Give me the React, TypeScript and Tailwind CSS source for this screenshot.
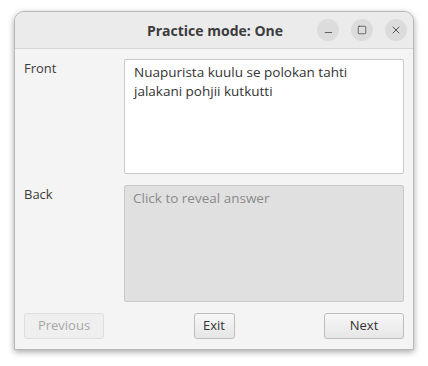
import { X, Minus, Square } from 'lucide-react';

const font = { fontFamily: '"Open Sans", "Noto Sans", sans-serif' };

export default function App() {
  return (
    <div className="w-[428px] h-[366px] bg-white pt-[11px] pl-[14px]" style={font}>
      {/* window */}
      <div className="w-[400px] h-[339px] flex flex-col bg-[#f4f4f4] border border-[#b8b8b8] rounded-t-[10px] shadow-[0_2px_6px_rgba(0,0,0,0.35)] overflow-hidden">
        {/* titlebar */}
        <div className="relative h-[37px] shrink-0 flex items-center justify-center bg-[#ebebeb] border-b border-[#d6d6d6]">
          <span className="text-[14px] font-bold text-[#3c3c3c] ml-[2px]">Practice mode: One</span>
          <div className="absolute right-[6px] top-[7px] flex gap-[12px]">
            <div className="w-[22px] h-[22px] rounded-full bg-[#dcdcdc] flex items-center justify-center text-[#333]">
              <Minus size={11} strokeWidth={1.6} className="mt-[5px]" />
            </div>
            <div className="w-[22px] h-[22px] rounded-full bg-[#dcdcdc] flex items-center justify-center text-[#333]">
              <Square size={10} strokeWidth={1.6} />
            </div>
            <div className="w-[22px] h-[22px] rounded-full bg-[#dcdcdc] flex items-center justify-center text-[#333]">
              <X size={12} strokeWidth={1.6} />
            </div>
          </div>
        </div>

        {/* body */}
        <div className="flex-1 flex flex-col px-[9px] pt-[10px] pb-[10px] gap-[11px]">
          <div className="flex">
            <div className="w-[100px] text-[13px] text-[#3c3c3c]">Front</div>
            <div className="flex-1 h-[115px] bg-white border border-[#c9c9c9] rounded-[2px] px-[9px] pt-[3px] text-[13.5px] leading-[19px] text-[#333]">
              Nuapurista kuulu se polokan tahti
              <br />
              jalakani pohjii kutkutti
            </div>
          </div>
          <div className="flex">
            <div className="w-[100px] text-[13px] text-[#3c3c3c]">Back</div>
            <div className="flex-1 h-[117px] bg-[#e0e0e0] border border-[#c9c9c9] rounded-[2px] px-[8px] pt-[3px] text-[13.5px] leading-[19px] text-[#8a8a8a]">
              Click to reveal answer
            </div>
          </div>
          <div className="flex items-center justify-between text-[13px]">
            <button className="w-[80px] h-[26px] rounded-[3px] border border-[#dedede] bg-[#efefef] text-[#a8a8a8]">Previous</button>
            <button className="w-[41px] h-[26px] rounded-[3px] border border-[#bdbdbd] bg-gradient-to-b from-[#f7f7f7] to-[#e6e6e6] text-[#333]">Exit</button>
            <button className="w-[80px] h-[26px] rounded-[3px] border border-[#bdbdbd] bg-gradient-to-b from-[#f7f7f7] to-[#e6e6e6] text-[#333]">Next</button>
          </div>
        </div>
      </div>
    </div>
  );
}
